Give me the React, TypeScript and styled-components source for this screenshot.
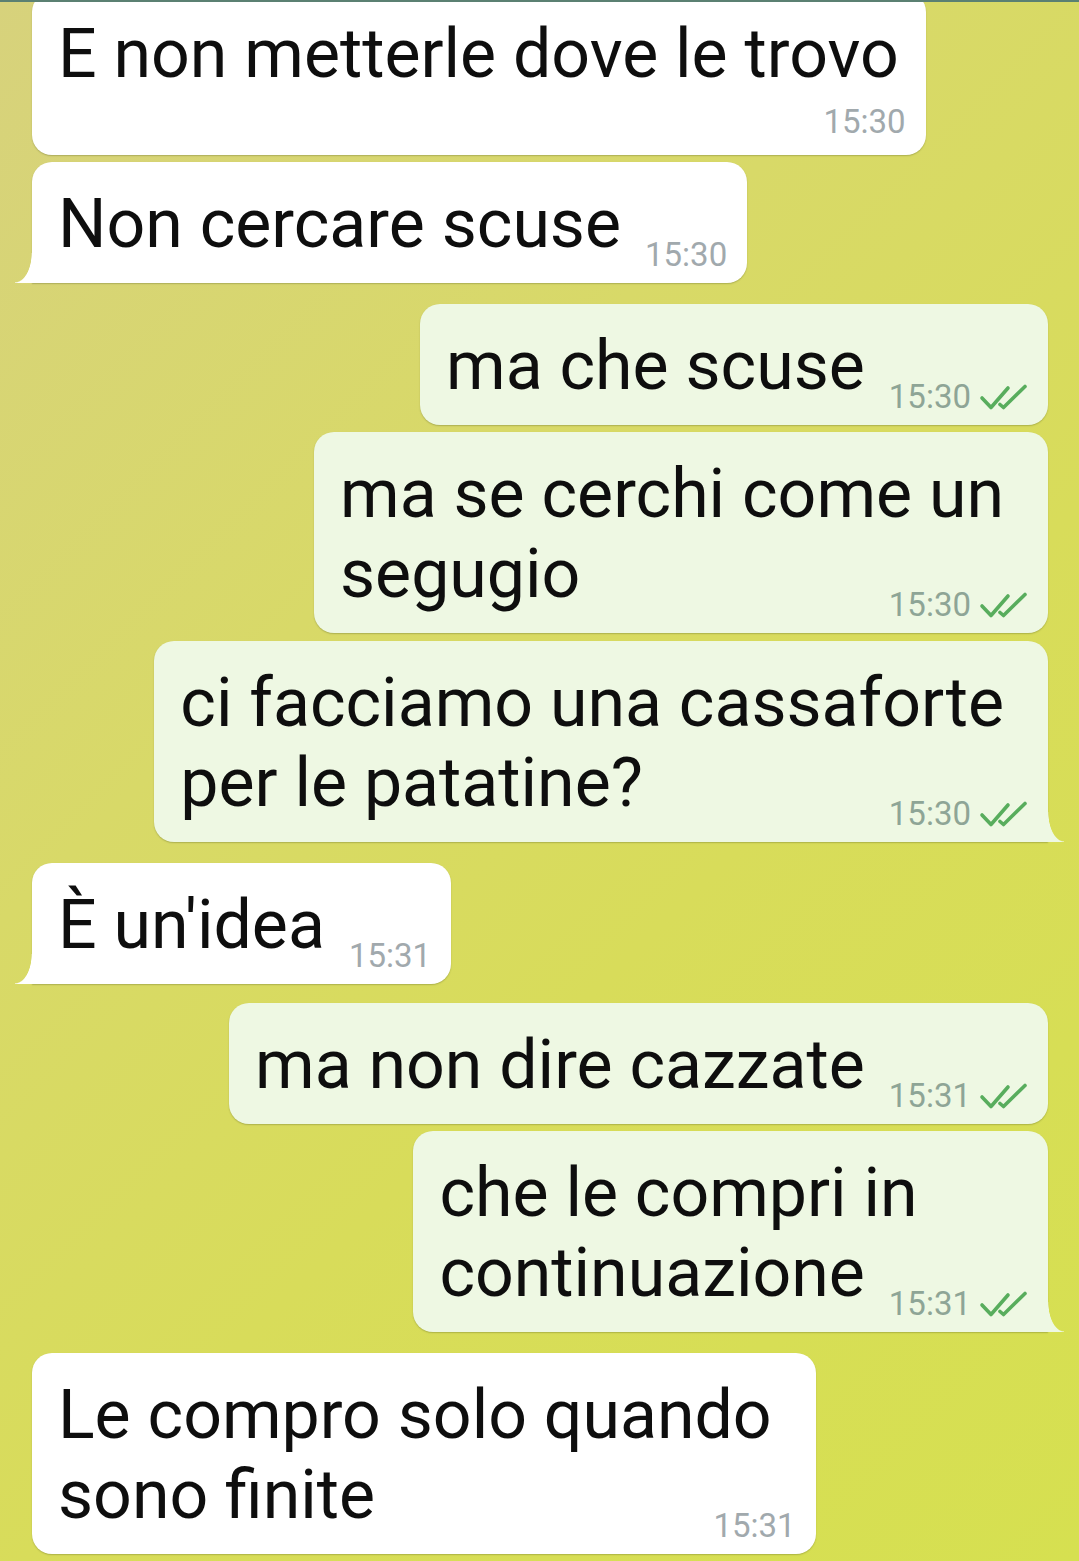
import React from "react";
import styled, { createGlobalStyle, css } from "styled-components";

const Global = createGlobalStyle`
  html, body {
    margin: 0;
    padding: 0;
  }
  body {
    font-family: Roboto, "Noto Sans", "Liberation Sans", sans-serif;
    -webkit-font-smoothing: antialiased;
  }
`;

type Side = "in" | "out";

const Screen = styled.div`
  width: 1079px;
  height: 1561px;
  overflow: hidden;
  background: linear-gradient(135deg, #d7d27c 0%, #d8d968 35%, #d8dc5a 60%, #d6e050 100%);
`;

const TopEdge = styled.div`
  position: relative;
  z-index: 2;
  height: 2px;
  background: #5b8072;
`;

const Thread = styled.div`
  display: flex;
  flex-direction: column;
  padding: 0 31px 0 32px;
  margin-top: -10px;
`;

const Row = styled.div<{ $side: Side; $gap: number }>`
  display: flex;
  justify-content: ${(p) => (p.$side === "out" ? "flex-end" : "flex-start")};
  margin-top: ${(p) => p.$gap}px;
`;

const Bubble = styled.div<{ $side: Side; $tail?: boolean }>`
  position: relative;
  display: flex;
  flex-direction: column;
  padding: 22px 20px 19px 26px;
  border-radius: 20px;
  background: ${(p) => (p.$side === "out" ? "#eef8e3" : "#ffffff")};
  box-shadow: 0 1px 1.5px rgba(60, 70, 20, 0.28);

  ${(p) =>
    p.$tail &&
    (p.$side === "in"
      ? css`
          border-bottom-left-radius: 0;
          &::after {
            content: "";
            position: absolute;
            left: -17px;
            bottom: 0;
            width: 17px;
            height: 30px;
            background: radial-gradient(ellipse 17px 30px at 0 0, transparent 96%, #ffffff 100%);
          }
        `
      : css`
          border-bottom-right-radius: 0;
          &::after {
            content: "";
            position: absolute;
            right: -16px;
            bottom: 0;
            width: 16px;
            height: 30px;
            background: radial-gradient(ellipse 16px 30px at 100% 0, transparent 96%, #eef8e3 100%);
          }
        `)}
`;

const Line = styled.div<{ $trail?: number }>`
  white-space: nowrap;
  font-size: 68px;
  line-height: 80px;
  color: #0e0e0e;
  padding-right: ${(p) => p.$trail ?? 0}px;
`;

const LastLine = styled.div`
  display: flex;
  align-items: flex-end;
  column-gap: 24px;
`;

const Meta = styled.span<{ $side: Side }>`
  display: inline-flex;
  align-items: center;
  gap: 8px;
  margin-left: auto;
  margin-bottom: -11px;
  white-space: nowrap;
  font-size: 33px;
  line-height: 40px;
  color: ${(p) => (p.$side === "out" ? "#8ea596" : "#a1a9ad")};
`;

const MetaRow = styled.div`
  display: flex;
  justify-content: flex-end;
  margin: 8px 0 5px;
`;

const Ticks = () => (
  <svg width="49" height="27" viewBox="0 0 49 27" fill="none">
    <path
      d="M3 14 L12 23.5 L29 4"
      stroke="#58ad5d"
      strokeWidth="3.6"
      strokeLinecap="round"
      strokeLinejoin="round"
    />
    <path
      d="M21 20.5 L24.5 23.5 L46 2.5"
      stroke="#58ad5d"
      strokeWidth="3.6"
      strokeLinecap="round"
      strokeLinejoin="round"
    />
  </svg>
);

type Msg = {
  side: Side;
  lines: string[];
  time: string;
  gap: number;
  tail?: boolean;
  metaBelow?: boolean;
};

const messages: Msg[] = [
  { side: "in", lines: ["E non metterle dove le trovo"], time: "15:30", gap: 0, metaBelow: true },
  { side: "in", lines: ["Non cercare scuse"], time: "15:30", gap: 7, tail: true },
  { side: "out", lines: ["ma che scuse"], time: "15:30", gap: 21 },
  { side: "out", lines: ["ma se cerchi come un", "segugio"], time: "15:30", gap: 7 },
  { side: "out", lines: ["ci facciamo una cassaforte", "per le patatine?"], time: "15:30", gap: 8, tail: true },
  { side: "in", lines: ["È un'idea"], time: "15:31", gap: 21, tail: true },
  { side: "out", lines: ["ma non dire cazzate"], time: "15:31", gap: 19 },
  { side: "out", lines: ["che le compri in", "continuazione"], time: "15:31", gap: 7, tail: true },
  { side: "in", lines: ["Le compro solo quando", "sono finite"], time: "15:31", gap: 21 },
];

const MetaInfo = ({ side, time }: { side: Side; time: string }) => (
  <Meta $side={side}>
    {time}
    {side === "out" && <Ticks />}
  </Meta>
);

const Message = ({ m }: { m: Msg }) => {
  const head = m.lines.slice(0, -1);
  const last = m.lines[m.lines.length - 1];
  return (
    <Row $side={m.side} $gap={m.gap}>
      <Bubble $side={m.side} $tail={m.tail}>
        {m.metaBelow ? (
          <>
            {m.lines.map((l, i) => (
              <Line key={i} $trail={7}>
                {l}
              </Line>
            ))}
            <MetaRow>
              <MetaInfo side={m.side} time={m.time} />
            </MetaRow>
          </>
        ) : (
          <>
            {head.map((l, i) => (
              <Line key={i} $trail={24}>
                {l}
              </Line>
            ))}
            <LastLine>
              <Line>{last}</Line>
              <MetaInfo side={m.side} time={m.time} />
            </LastLine>
          </>
        )}
      </Bubble>
    </Row>
  );
};

export default function App() {
  return (
    <Screen>
      <Global />
      <TopEdge />
      <Thread>
        {messages.map((m, i) => (
          <Message key={i} m={m} />
        ))}
      </Thread>
    </Screen>
  );
}
